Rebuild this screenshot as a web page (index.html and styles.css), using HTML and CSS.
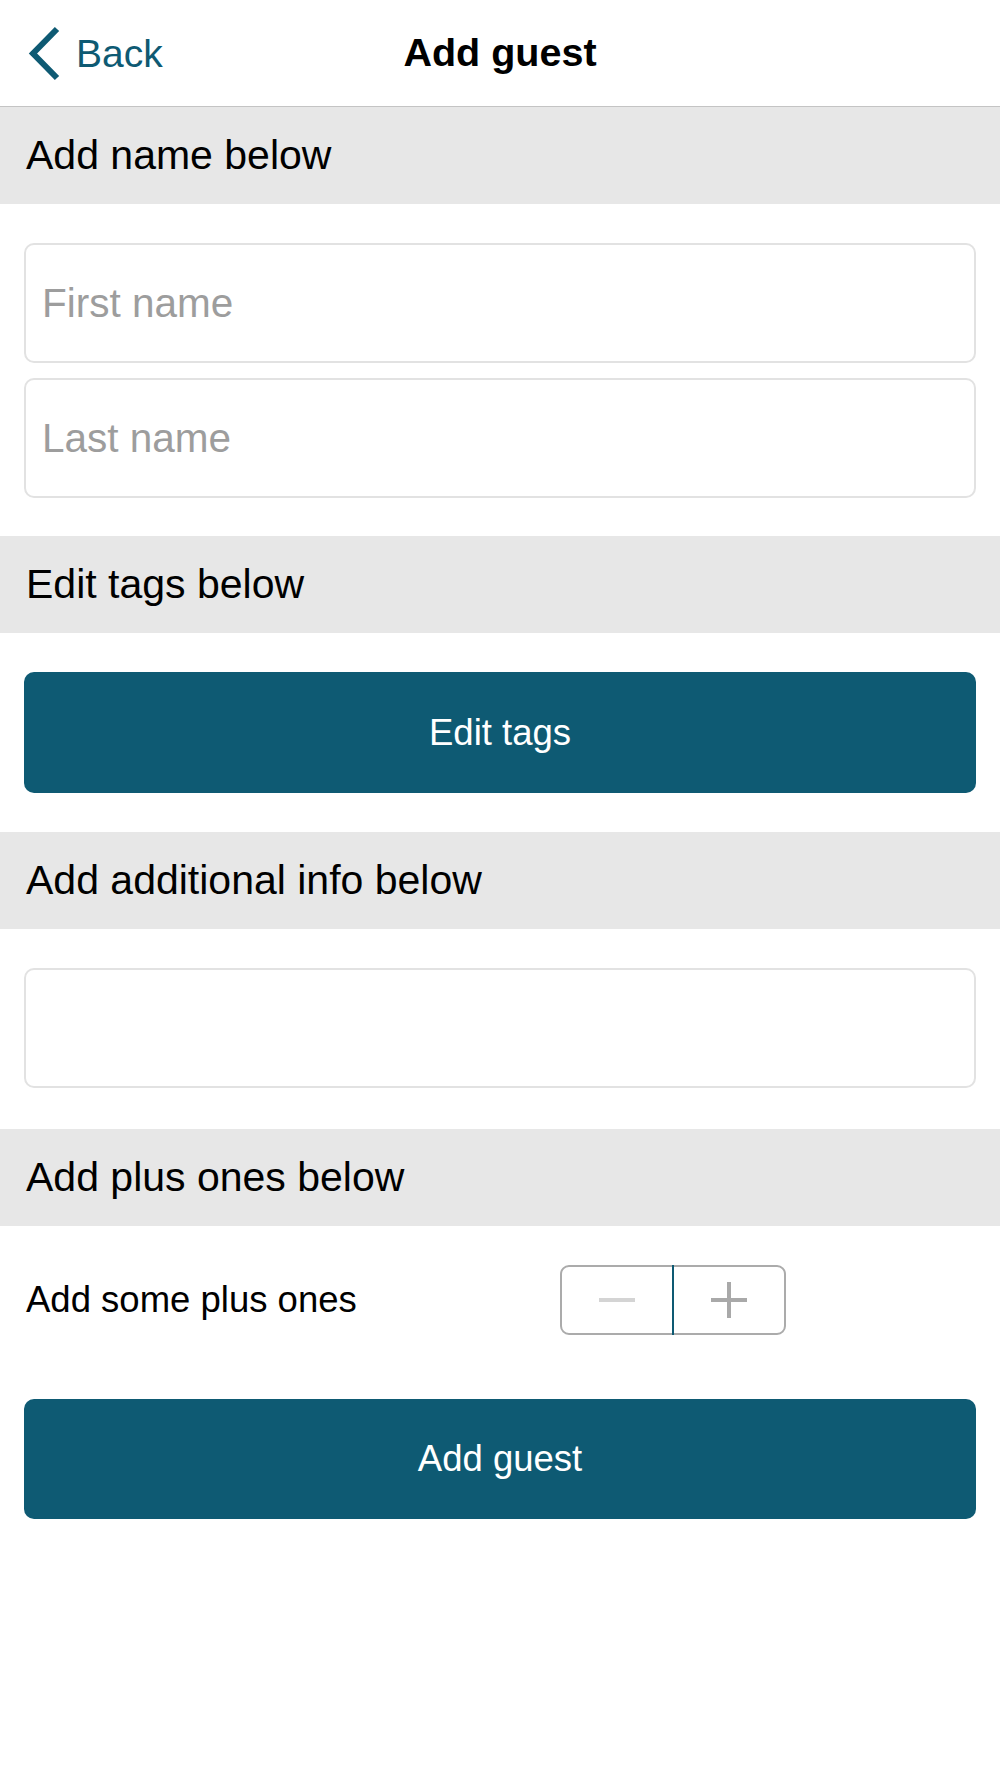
FILE: index.html
```html
<!DOCTYPE html>
<html lang="en">
<head>
<meta charset="utf-8">
<title>Add guest</title>
<link rel="stylesheet" href="styles.css">
</head>
<body>
<div class="app">
  <header class="nav">
    <a class="back" href="#">
      <svg class="chev" width="34" height="56" viewBox="0 0 34 56" aria-hidden="true">
        <polyline points="29,3 5,27.5 29,52" fill="none" stroke="#0e5a73" stroke-width="6" stroke-linecap="butt" stroke-linejoin="miter"/>
      </svg>
      <span>Back</span>
    </a>
    <h1 class="title">Add guest</h1>
  </header>

  <div class="section-head">Add name below</div>
  <div class="section-body stack">
    <input class="field" type="text" placeholder="First name">
    <input class="field" type="text" placeholder="Last name">
  </div>

  <div class="section-head">Edit tags below</div>
  <div class="section-body">
    <button class="primary" type="button">Edit tags</button>
  </div>

  <div class="section-head">Add additional info below</div>
  <div class="section-body info">
    <input class="field" type="text">
  </div>

  <div class="section-head">Add plus ones below</div>
  <div class="section-body plus">
    <div class="plus-row">
      <span class="plus-label">Add some plus ones</span>
      <div class="stepper">
        <button class="step minus" type="button" aria-label="minus"><span class="hbar light"></span></button>
        <span class="divider"></span>
        <button class="step add" type="button" aria-label="plus"><span class="hbar"></span><span class="vbar"></span></button>
      </div>
    </div>
    <button class="primary final" type="button">Add guest</button>
  </div>
</div>
</body>
</html>
```

FILE: styles.css
```css
* { box-sizing: border-box; }
html, body { margin: 0; padding: 0; background: #fff; }
body {
  font-family: "Liberation Sans", Arial, sans-serif;
  color: #000;
  width: 1000px;
  min-height: 1778px;
}
.nav {
  position: relative;
  height: 107px;
  border-bottom: 1px solid #c4c4c4;
  display: flex;
  align-items: center;
  justify-content: center;
}
.back {
  position: absolute;
  left: 28px;
  top: 25px;
  display: flex;
  align-items: center;
  gap: 14px;
  color: #0e5a73;
  text-decoration: none;
  font-size: 39px;
  line-height: 56px;
}
.back span { margin-top: 1px; }
.chev { display: block; }
.title {
  margin: 0;
  font-size: 39.5px;
  font-weight: 700;
  line-height: 1;
  margin-top: -1px;
}
.section-head {
  height: 97px;
  background: #e7e7e7;
  display: flex;
  align-items: center;
  padding-left: 26px;
  font-size: 41px;
}
.section-body {
  padding: 39px 24px 39px;
}
.stack {
  display: flex;
  flex-direction: column;
  gap: 15px;
  padding-bottom: 38px;
}
.info { padding-bottom: 41px; }
.field {
  display: block;
  width: 100%;
  height: 120px;
  border: 2px solid #e2e2e2;
  border-radius: 10px;
  padding: 0 0 0 16px;
  font-family: inherit;
  font-size: 40.5px;
  color: #000;
  background: #fff;
  outline: none;
}
.field::placeholder { color: #9d9d9d; }
.primary {
  display: block;
  width: 100%;
  height: 121px;
  border: none;
  border-radius: 10px;
  background: #0e5a73;
  color: #fff;
  font-family: inherit;
  font-size: 36.5px;
  cursor: pointer;
}
.plus { padding-bottom: 0; }
.plus-row {
  display: flex;
  align-items: center;
  height: 70px;
}
.plus-label {
  flex: 0 0 536px;
  padding-left: 2px;
  font-size: 36.5px;
}
.stepper {
  display: flex;
  width: 226px;
  height: 70px;
  border: 2px solid #ababab;
  border-radius: 9px;
}
.step {
  position: relative;
  flex: 1;
  border: none;
  background: transparent;
  padding: 0;
  cursor: pointer;
}
.divider {
  width: 2px;
  background: #0e5a73;
  margin: -2px 0;
}
.hbar {
  position: absolute;
  left: 50%;
  top: 50%;
  width: 36px;
  height: 4px;
  margin: -2px 0 0 -18px;
  background: #a9a9a9;
}
.hbar.light { background: #d4d4d4; }
.vbar {
  position: absolute;
  left: 50%;
  top: 50%;
  width: 4px;
  height: 36px;
  margin: -18px 0 0 -2px;
  background: #a9a9a9;
}
.final { margin-top: 64px; height: 120px; }
```
